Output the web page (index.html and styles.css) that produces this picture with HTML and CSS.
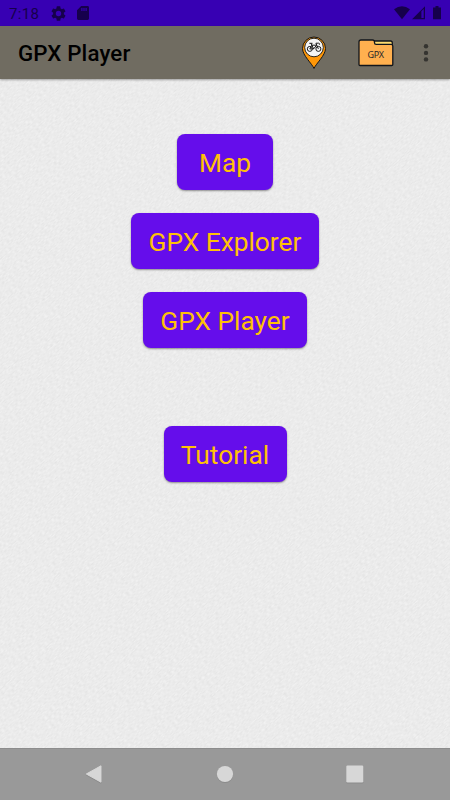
FILE: index.html
```html
<!DOCTYPE html>
<html lang="en">
<head>
<meta charset="utf-8">
<title>GPX Player</title>
<link rel="stylesheet" href="styles.css">
</head>
<body>
<div class="screen">
  <div class="status">
    <span class="time">7:18</span>
    <svg class="gear" width="15" height="15" viewBox="2 2 20 20"><path fill="currentColor" fill-rule="evenodd" d="M19.14 12.94c.04-.3.06-.61.06-.94s-.02-.64-.07-.94l2.03-1.58a.49.49 0 0 0 .12-.61l-1.92-3.32a.49.49 0 0 0-.59-.22l-2.39.96a7 7 0 0 0-1.62-.94l-.36-2.54a.48.48 0 0 0-.48-.41h-3.84a.48.48 0 0 0-.47.41l-.36 2.54a7 7 0 0 0-1.62.94l-2.39-.96a.49.49 0 0 0-.59.22L2.74 8.87a.48.48 0 0 0 .12.61l2.03 1.58a7 7 0 0 0 0 1.880l-2.03 1.58a.49.49 0 0 0-.12.61l1.920 3.32c.12.22.37.29.59.22l2.39-.96c.5.38 1.03.7 1.62.94l.36 2.54c.05.24.24.41.48.41h3.84c.24 0 .44-.17.47-.41l.36-2.54a7 7 0 0 0 1.62-.94l2.39.96c.22.08.47 0 .59-.22l1.920-3.32a.48.48 0 0 0-.12-.61zM12 15.6a3.6 3.6 0 1 1 0-7.2 3.6 3.6 0 0 1 0 7.2z"/></svg>
    <svg class="sd" width="12" height="14" viewBox="0 0 12 14"><path fill="currentColor" fill-rule="evenodd" d="M4.2 0h6.4Q12 0 12 1.4v11.2q0 1.4-1.4 1.4H1.4Q0 14 0 12.6V4.2zM4.3 2v3h1.2V2zm2.1 0v3h1.2V2zm2.1 0v3h1.2V2z"/></svg>
    <svg class="signals" width="50" height="15" viewBox="0 0 50 15"><path fill="currentColor" d="M0 3.3Q8-3 16 3.3L8 13.3z"/><path fill="currentColor" fill-rule="evenodd" d="M18 13.3 31 .3v13zm9.4-8V12h2.3V3z"/><path fill="currentColor" d="M41.5.1h3v1.5H47v11.7h-8V1.6h2.5z"/></svg>
  </div>
  <header class="appbar">
    <h1>GPX Player</h1>
    <svg class="pin" width="26" height="34" viewBox="0 0 26 34"><path d="M13 32.500C11 27.500 1.500 19.500 1.500 12.500a11.500 11.500 0 0 1 23 0C24.500 19.500 15 27.500 13 32.500z" fill="#ff9708" stroke="#171717"/><circle cx="13" cy="11.500" r="9.300" fill="#f4f4f4" stroke="#171717" stroke-width=".9"/><g fill="none" stroke="#111" stroke-width=".95"><circle cx="8.800" cy="12.900" r="2.500"/><circle cx="17.400" cy="12.900" r="2.500"/><path d="M8.800 12.900 10.800 9.200h4.800l-3 3.700H8.800m3.800 0L10 7.300m-1.700 0h3.200m5.900 5.600L14.900 7.200h2.800q1.300.2.700 1.500"/></g></svg>
    <svg class="folder" width="36" height="28" viewBox="0 0 36 28"><path d="M14 2h18.500q1.800 0 1.800 2v4H14z" fill="#ffdc70" stroke="#11151b" stroke-width="1.300"/><path d="M1 25.500V3Q1 1 3 1h11.500q2 0 2 2v.7q0 1.600 1.600 1.600H33q1.800 0 1.800 1.800v18.400q0 1-1 1H2q-1 0-1-1z" fill="#ffb04f" stroke="#11151b" stroke-width="1.300"/><text x="17.800" y="19.300" text-anchor="middle" textLength="16.500">GPX</text></svg>
    <svg class="more" width="6" height="20" viewBox="0 0 6 20" fill="#353430"><circle cx="3" cy="3.200" r="2.200"/><circle cx="3" cy="9.900" r="2.200"/><circle cx="3" cy="16.400" r="2.200"/></svg>
  </header>
  <main>
    <svg class="texture" width="450" height="669" aria-hidden="true"><defs><filter id="weave" x="0" y="0" width="100%" height="100%" color-interpolation-filters="sRGB"><feTurbulence type="fractalNoise" baseFrequency=".32 .85" numOctaves="1" seed="4"/><feColorMatrix values=".1 0 0 0 .872 .1 0 0 0 .872 .1 0 0 0 .872 0 0 0 0 1"/></filter></defs><g transform="rotate(-42 225 335)"><rect x="-250" y="-150" width="950" height="970" filter="url(#weave)"/></g></svg>
    <button class="map">Map</button>
    <button class="explorer">GPX Explorer</button>
    <button class="player">GPX Player</button>
    <button class="tutorial">Tutorial</button>
  </main>
  <nav>
    <svg width="18" height="20" viewBox="0 0 18 20"><path d="M1.300 10 16 1.800v16.400z" fill="#d7d7d7" stroke="#d7d7d7" stroke-linejoin="round"/></svg>
    <svg width="18" height="20" viewBox="0 0 18 20"><circle cx="9" cy="10" r="8.100" fill="#d7d7d7"/></svg>
    <svg width="18" height="20" viewBox="0 0 18 20"><rect x=".3" y="1.500" width="17" height="17" rx="1.200" fill="#d7d7d7"/></svg>
  </nav>
</div>
</body>
</html>
```
FILE: styles.css
```css
* { box-sizing: border-box; }
body { margin: 0; font-family: Roboto, sans-serif; }
.screen { width: 450px; height: 800px; display: flex; flex-direction: column; overflow: hidden; }
.status { height: 26px; flex: none; background: #3700b3; color: #16004c; display: flex; align-items: flex-start; padding: 6px 6px 0 9px; }
.time { width: 42px; font-size: 15px; line-height: 16px; letter-spacing: .3px; }
.sd { margin-left: 11px; }
.signals { margin-left: auto; }
.appbar { height: 53px; flex: none; display: flex; align-items: center; background: #706c61; padding: 0 21px 0 18px; position: relative; z-index: 1; box-shadow: 0 1px 2px #0005; }
h1 { margin: 1px auto 0 0; font-size: 22.3px; line-height: 28px; font-weight: 500; letter-spacing: .15px; }
.pin { margin-right: 31px; }
.folder { margin-right: 29px; }
.folder text { font: 9px "Noto Sans", sans-serif; fill: #282828; }
main { flex: 1; min-height: 0; position: relative; background: #ebebeb; display: flex; flex-direction: column; align-items: center; padding-top: 55px; gap: 23px; }
.texture { position: absolute; inset: 0; }
button { position: relative; flex: none; height: 56px; padding: 2px 0 0; border: 0; border-radius: 8px; background: #650deb; color: #ffc107; font: 26.3px/30px Roboto, sans-serif; box-shadow: 0 1px 2px #0006; }
.map { width: 96px; }
.explorer { width: 188px; }
.player { width: 164px; }
.tutorial { width: 123px; margin-top: 55px; }
nav { height: 52px; flex: none; background: #999; border-top: 1px solid #8d8d8d; position: relative; display: flex; align-items: center; justify-content: space-between; padding: 0 86px 2px 85px; }
nav svg { filter: drop-shadow(0 1px 0 #8b8b8b); }
```
